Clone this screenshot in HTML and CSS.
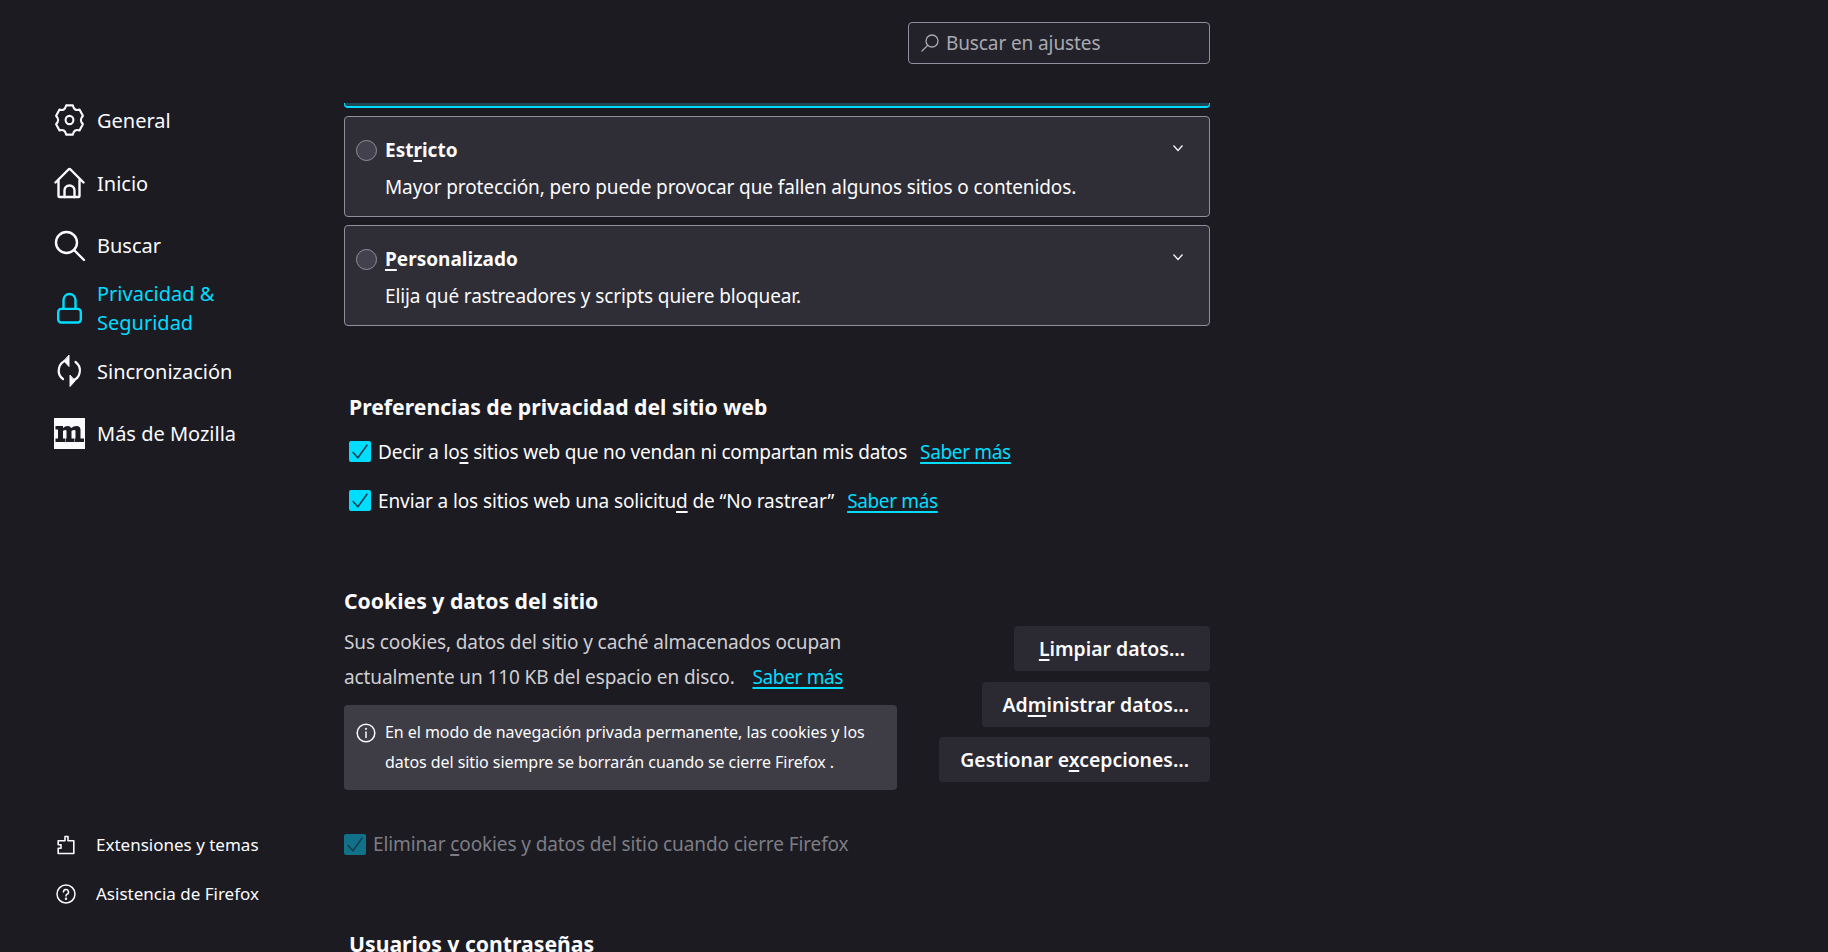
FILE: index.html
```html
<!DOCTYPE html>
<html lang="es">
<head>
    <meta charset="UTF-8">
    <title>Ajustes</title>
    <link rel="stylesheet" href="styles.css">
</head>
<body>

<nav class="sidebar">
    <ul class="nav-list">
        <li class="nav-item">
            <svg class="nav-icon" viewBox="0 0 32 32" fill="none" stroke="currentColor" stroke-width="2.2" stroke-linejoin="round"><g transform="translate(15.5 0) scale(.93 1) translate(-16 0)"><path d="M12.37 1.45H19.63Q21 7.34 26.79 5.58L30.42 11.87Q26 16 30.42 20.13L26.79 26.42Q21 24.66 19.63 30.55H12.37Q11 24.66 5.21 26.42L1.58 20.13Q6 16 1.58 11.87L5.21 5.58Q11 7.34 12.37 1.45z"/><circle cx="16" cy="16" r="4.2"/></g></svg>
            <span>General</span>
        </li>
        <li class="nav-item">
            <svg class="nav-icon" viewBox="0 0 32 32" fill="none" stroke="currentColor" stroke-width="2.4" stroke-linejoin="round" stroke-linecap="round"><path d="M1.500 15.500 14.500 2.500a1.500 1.500 0 0 1 2 0l13 13M4.500 12.500V29a1 1 0 0 0 1 1h19a1 1 0 0 0 1-1V12.500"/><path d="M10.500 30v-6.500a5 5 0 0 1 10 0V30"/></svg>
            <span>Inicio</span>
        </li>
        <li class="nav-item">
            <svg class="nav-icon" viewBox="0 0 32 32" fill="none" stroke="currentColor" stroke-width="2.4" stroke-linecap="round"><circle cx="12.500" cy="12.500" r="10.500"/><path d="M20.500 20.500 30 30"/></svg>
            <span>Buscar</span>
        </li>
        <li class="nav-item active">
            <svg class="nav-icon" viewBox="0 0 32 32" fill="none" stroke="currentColor" stroke-width="2.400" stroke-linejoin="round"><rect x="4.200" y="16.900" width="22.600" height="13.600" rx="3"/><path d="M9.500 16.900V8a6 6 0 0 1 12 0v8.900"/></svg>
            <span>Privacidad &amp;<br>Seguridad</span>
        </li>
        <li class="nav-item">
            <svg class="nav-icon" viewBox="0 0 32 32" fill="none" stroke="currentColor" stroke-width="2.200" stroke-linecap="round"><path d="M9 24A10.500 10.500 0 0 1 13 5.300"/><path d="M21.500 7A10.500 10.500 0 0 1 18 25.700"/><path d="M15 .5v11L10 6z" fill="currentColor" stroke-width="1"/><path d="M16 20.500v11l5-5.500z" fill="currentColor" stroke-width="1"/></svg>
            <span>Sincronización</span>
        </li>
        <li class="nav-item">
            <svg class="nav-icon" viewBox="0 0 32 32"><rect width="31" height="31" fill="#fbfbfe"/><path fill="#1c1b22" d="M1.500 8H9V10Q11 8 13.500 8Q16.500 8 17.200 10Q19.500 8 22.500 8Q26.500 8 26.500 12V20.500H30V24H20.500V20.500H21.500V13Q21.500 12 20.500 12Q18.500 12 17.500 13V20.500H20V24H11.500V20.500H12.500V13Q12.500 12 11.500 12Q10 12 9 13V20.500H11V24H1.500V20.500H4V11.500H1.500z"/></svg>
            <span>Más de Mozilla</span>
        </li>
    </ul>
    <ul class="nav-footer">
        <li class="footer-item">
            <svg class="footer-icon" viewBox="0 0 20 20" fill="none" stroke="currentColor" stroke-width="1.600" stroke-linejoin="round"><path d="M9 1.500h3v4.300h5.800V18.500H2.200v-5.300H5v-3.400H2.200V5.800H9z"/></svg>
            <span>Extensiones y temas</span>
        </li>
        <li class="footer-item">
            <svg class="footer-icon" viewBox="0 0 20 20" fill="none" stroke="currentColor" stroke-width="1.500" stroke-linecap="round"><circle cx="10" cy="10" r="9"/><path d="M7.500 8a2.500 2.500 0 1 1 3.700 2.200c-.8.500-1.200 1-1.200 1.800"/><circle cx="10" cy="14.800" r=".5"/></svg>
            <span>Asistencia de Firefox</span>
        </li>
    </ul>
</nav>

<main class="content">
    <div class="search-row">
        <div class="search-box">
            <svg class="search-icon" viewBox="0 0 18 18" fill="none" stroke="currentColor" stroke-width="1.300" stroke-linecap="round"><circle cx="11" cy="7" r="6"/><path d="M6.500 11.500 1 17"/></svg>
            <span>Buscar en ajustes</span>
        </div>
    </div>

    <div class="card-clipped"></div>

    <div class="card">
        <div class="card-head">
            <span class="radio"></span>
            <strong class="card-title">Est<u>r</u>icto</strong>
            <svg class="chevron" viewBox="0 0 12 8" fill="none" stroke="currentColor" stroke-width="1.200"><path d="M1.500 1.500 6 6.500l4.500-5"/></svg>
        </div>
        <p class="card-desc">Mayor protección, pero puede provocar que fallen algunos sitios o contenidos.</p>
    </div>
    <div class="card">
        <div class="card-head">
            <span class="radio"></span>
            <strong class="card-title"><u>P</u>ersonalizado</strong>
            <svg class="chevron" viewBox="0 0 12 8" fill="none" stroke="currentColor" stroke-width="1.200"><path d="M1.500 1.500 6 6.500l4.500-5"/></svg>
        </div>
        <p class="card-desc">Elija qué rastreadores y scripts quiere bloquear.</p>
    </div>

    <section class="privacy">
        <h2 class="heading privacy-heading">Preferencias de privacidad del sitio web</h2>
        <div class="check-row tall">
            <span class="checkbox"><svg viewBox="0 0 20 20" fill="none" stroke="#14404e" stroke-width="1.500"><path d="M3 10.500 8 16 17 3.500"/></svg></span>
            <span class="tight">Decir a lo<u>s</u> sitios web que no vendan ni compartan mis datos</span>
            <a class="link" href="#">Saber más</a>
        </div>
        <div class="check-row tall">
            <span class="checkbox"><svg viewBox="0 0 20 20" fill="none" stroke="#14404e" stroke-width="1.500"><path d="M3 10.500 8 16 17 3.500"/></svg></span>
            <span>Enviar a los sitios web una solicitu<u>d</u> de “No rastrear”</span>
            <a class="link" href="#">Saber más</a>
        </div>
    </section>

    <section class="cookies">
        <h2 class="heading">Cookies y datos del sitio</h2>
        <div class="cookies-body">
            <div class="cookies-left">
                <p class="cookies-text">Sus cookies, datos del sitio y caché almacenados ocupan<br>actualmente un 110 KB del espacio en disco. <a class="link" href="#">Saber más</a></p>
                <div class="notice">
                    <svg class="notice-icon" viewBox="0 0 20 20" fill="none" stroke="currentColor" stroke-width="1.500" stroke-linecap="round"><circle cx="10" cy="10" r="8.800"/><path d="M10 9v5.500"/><circle cx="10" cy="5.800" r=".4"/></svg>
                    <p>En el modo de navegación privada permanente, las cookies y los datos del sitio siempre se borrarán cuando se cierre Firefox .</p>
                </div>
            </div>
            <div class="cookies-buttons">
                <button class="btn btn-wide"><u>L</u>impiar datos…</button>
                <button class="btn">Ad<u>m</u>inistrar datos…</button>
                <button class="btn">Gestionar e<u>x</u>cepciones…</button>
            </div>
        </div>
        <div class="check-row disabled">
            <span class="checkbox"><svg viewBox="0 0 20 20" fill="none" stroke="#14404e" stroke-width="1.500"><path d="M3 10.500 8 16 17 3.500"/></svg></span>
            <span>Eliminar <u>c</u>ookies y datos del sitio cuando cierre Firefox</span>
        </div>
    </section>

    <h2 class="heading users">Usuarios y contraseñas</h2>
</main>

</body>
</html>
```

FILE: styles.css
```css
* {
    box-sizing: border-box;
}
html, body {
    height: 100%;
}
body {
    margin: 0;
    display: flex;
    overflow: hidden;
    background-color: #1c1b22;
    color: #fbfbfe;
    font-family: "Noto Sans", sans-serif;
    font-size: 19px;
}
p, ul, h2 {
    margin: 0;
    padding: 0;
}
ul {
    list-style: none;
}
u {
    text-decoration-thickness: 2px;
    text-underline-offset: 3px;
}
.sidebar {
    width: 344px;
    flex-shrink: 0;
    height: 952px;
    padding: 89px 0 34px 54px;
    display: flex;
    flex-direction: column;
    justify-content: space-between;
}
.nav-item {
    height: 62.7px;
    display: flex;
    align-items: center;
    gap: 11px;
    font-size: 20px;
    line-height: 29px;
}
.nav-item.active {
    color: #00ddff;
}
.nav-icon {
    width: 32px;
    height: 32px;
    flex-shrink: 0;
}
.footer-item {
    height: 49px;
    display: flex;
    align-items: center;
    gap: 20px;
    padding-left: 2px;
    font-size: 17px;
}
.footer-icon {
    width: 20px;
    height: 20px;
    flex-shrink: 0;
}

.content {
    width: 866px;
    flex-shrink: 0;
    letter-spacing: -0.11px;
}
.search-row {
    height: 103px;
    padding-top: 22px;
    display: flex;
    justify-content: flex-end;
}
.search-box {
    width: 302px;
    height: 42px;
    display: flex;
    align-items: center;
    gap: 7px;
    padding-left: 12px;
    border: 1px solid #8f8f9d;
    border-radius: 4px;
    background-color: #23222b;
    color: #a9a9b0;
}
.search-icon {
    width: 18px;
    height: 18px;
}

.card-clipped {
    height: 5px;
    margin-bottom: 8px;
    background-color: #1f4a55;
    border-bottom: 2px solid #00ddff;
    border-left: 1px solid #00ddff;
    border-right: 1px solid #00ddff;
    border-radius: 0 0 4px 4px;
}
.card {
    height: 101px;
    margin-bottom: 8px;
    padding: 21px 11px 0;
    background-color: #2f2e36;
    border: 1px solid #8f8f9d;
    border-radius: 4px;
}
.card-head {
    display: flex;
    align-items: center;
    height: 24px;
}
.radio {
    width: 21px;
    height: 21px;
    margin-right: 8px;
    border: 1px solid #8f8f9d;
    border-radius: 50%;
    background-color: #42414d;
}
.card-title {
    flex: 1;
    letter-spacing: 0;
}
.chevron {
    width: 12px;
    height: 8px;
    margin: 0 14px 5px 0;
}
.card-desc {
    margin: 11px 0 0 29px;
    line-height: 28px;
}

.privacy {
    padding: 58px 0 0 5px;
}
.heading {
    font-size: 21.2px;
    font-weight: 700;
    line-height: 30px;
    letter-spacing: 0;
}
.privacy-heading {
    margin-bottom: 5px;
}
.check-row {
    height: 48px;
    display: flex;
    align-items: center;
}
.check-row.tall {
    height: 49px;
}
.tight {
    letter-spacing: -0.19px;
}
.checkbox {
    width: 22px;
    height: 21px;
    margin-right: 7px;
    flex-shrink: 0;
    border-radius: 2px;
    background-color: #00ddff;
}
.checkbox svg {
    display: block;
    width: 22px;
    height: 21px;
}
.link {
    margin-left: 13px;
    color: #00ddff;
    letter-spacing: -0.35px;
    text-decoration-thickness: 2px;
    text-underline-offset: 3px;
}

.cookies {
    padding-top: 61px;
}
.cookies-body {
    display: flex;
    justify-content: space-between;
}
.cookies-left {
    width: 553px;
    padding-top: 9px;
}
.cookies-text {
    color: #cfcfd3;
    line-height: 34.5px;
}
.notice {
    height: 85px;
    margin-top: 11px;
    padding: 12px 12px;
    display: flex;
    gap: 9px;
    background-color: #3e3d45;
    border-radius: 4px;
    font-size: 16px;
    line-height: 30px;
    letter-spacing: -0.06px;
}
.notice-icon {
    width: 20px;
    height: 20px;
    margin-top: 6px;
    flex-shrink: 0;
}
.cookies-buttons {
    padding-top: 10px;
    display: flex;
    flex-direction: column;
    align-items: flex-end;
    gap: 10.5px;
}
.btn {
    height: 45px;
    padding: 0 21px;
    border: none;
    border-radius: 4px;
    background-color: #2b2a33;
    color: #fbfbfe;
    font: 600 19.4px "Noto Sans", sans-serif;
}
.btn-wide {
    padding: 0 25px;
}
.disabled {
    margin-top: 30px;
    color: #7d7d84;
}
.disabled .checkbox {
    background-color: #107189;
}
.users {
    margin-left: 5px;
    margin-top: 61px;
}
```
